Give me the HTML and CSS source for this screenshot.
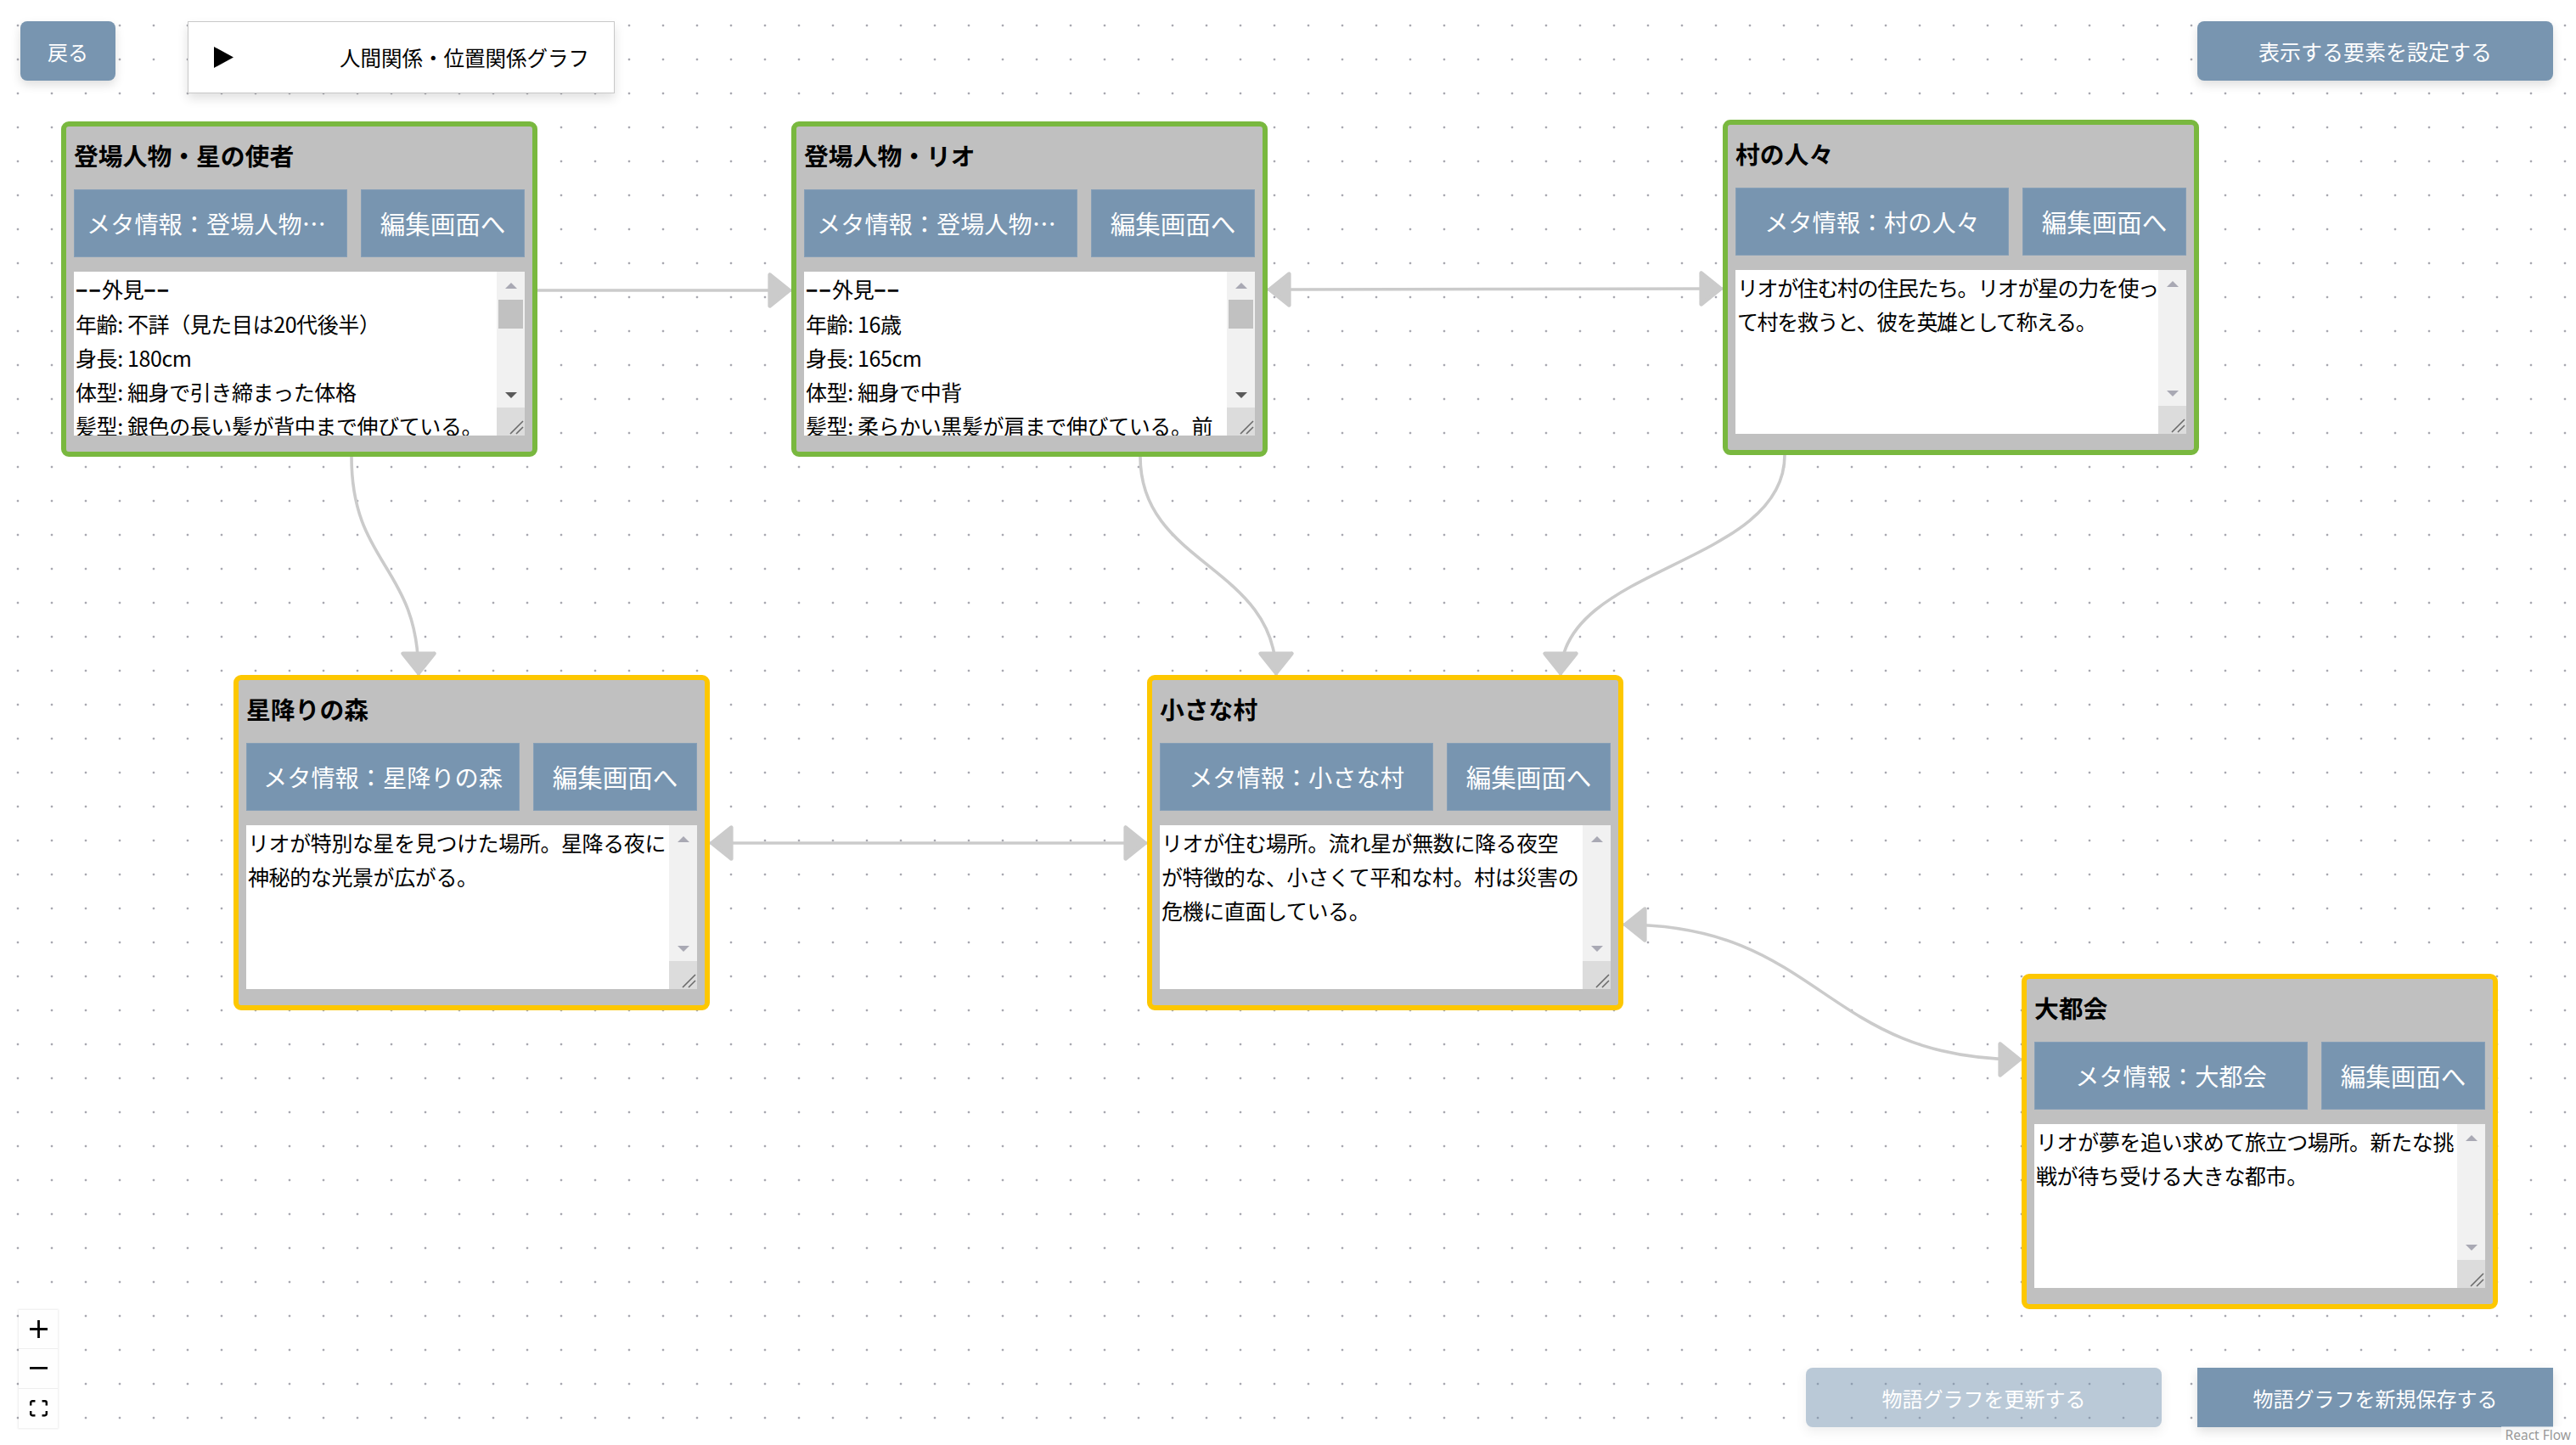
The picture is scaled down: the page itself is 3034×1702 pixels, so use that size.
FILE: index.html
```html
<!DOCTYPE html>
<html lang="ja">
<head>
<meta charset="utf-8">
<title>人間関係・位置関係グラフ</title>
<link rel="stylesheet" href="styles.css">
</head>
<body>
<div class="flow">
  <svg class="edges" width="3034" height="1702" viewBox="0 0 3034 1702">
    <defs>
      <marker id="arrow" viewBox="-10 -10 20 20" markerWidth="92" markerHeight="92" markerUnits="userSpaceOnUse" orient="auto-start-reverse" refX="0.5" refY="0">
        <polyline points="-5,-4 0,0 -5,4 -5,-4" fill="#cbcbcb" stroke="#cbcbcb" stroke-width="1" stroke-linejoin="round" stroke-linecap="round"/>
      </marker>
    </defs>
    <path class="edge" d="M633 342 L932 342" marker-end="url(#arrow)"/>
    <path class="edge" d="M1493 341 C1761 341 1761 340 2029 340" marker-start="url(#arrow)" marker-end="url(#arrow)"/>
    <path class="edge" d="M414 538 C414 666 493 666 493 795" marker-end="url(#arrow)"/>
    <path class="edge" d="M1343 538 C1343 666 1503 666 1503 795" marker-end="url(#arrow)"/>
    <path class="edge" d="M2102 536 C2102 666 1838 666 1838 795" marker-end="url(#arrow)"/>
    <path class="edge" d="M836 993 L1351 993" marker-start="url(#arrow)" marker-end="url(#arrow)"/>
    <path class="edge" d="M1912 1089 C2146 1089 2146 1248 2381 1248" marker-start="url(#arrow)" marker-end="url(#arrow)"/>
  </svg>

  <div class="node green n1">
    <div class="node-title">登場人物・星の使者</div>
    <div class="node-actions">
      <button class="btn meta"><span class="label">メタ情報：登場人物・星の使者</span></button>
      <button class="btn edit">編集画面へ</button>
    </div>
    <div class="notes">
      <div class="notes-text"><span class="dash">−−</span>外見<span class="dash">−−</span><br>年齢: 不詳（見た目は20代後半）<br>身長: 180cm<br>体型: 細身で引き締まった体格<br>髪型: 銀色の長い髪が背中まで伸びている。</div>
      <div class="scrollbar">
        <span class="sb-btn up"></span>
        <span class="thumb"></span>
        <span class="sb-space"></span>
        <span class="sb-btn down active"></span>
        <span class="grip"><svg width="33" height="33" viewBox="0 0 33 33"><path d="M16 31 L31 16 M23 31 L31 23" stroke="#6b6b6b" stroke-width="1.6" fill="none"/></svg></span>
      </div>
    </div>
  </div>

  <div class="node green n2">
    <div class="node-title">登場人物・リオ</div>
    <div class="node-actions">
      <button class="btn meta"><span class="label">メタ情報：登場人物・リオ</span></button>
      <button class="btn edit">編集画面へ</button>
    </div>
    <div class="notes">
      <div class="notes-text"><span class="dash">−−</span>外見<span class="dash">−−</span><br>年齢: 16歳<br>身長: 165cm<br>体型: 細身で中背<br>髪型: 柔らかい黒髪が肩まで伸びている。前</div>
      <div class="scrollbar">
        <span class="sb-btn up"></span>
        <span class="thumb"></span>
        <span class="sb-space"></span>
        <span class="sb-btn down active"></span>
        <span class="grip"><svg width="33" height="33" viewBox="0 0 33 33"><path d="M16 31 L31 16 M23 31 L31 23" stroke="#6b6b6b" stroke-width="1.6" fill="none"/></svg></span>
      </div>
    </div>
  </div>

  <div class="node green n3">
    <div class="node-title">村の人々</div>
    <div class="node-actions">
      <button class="btn meta"><span class="label">メタ情報：村の人々</span></button>
      <button class="btn edit">編集画面へ</button>
    </div>
    <div class="notes">
      <div class="notes-text tight">リオが住む村の住民たち。リオが星の力を使っ<br>て村を救うと、彼を英雄として称える。</div>
      <div class="scrollbar">
        <span class="sb-btn up"></span>
        <span class="sb-space"></span>
        <span class="sb-btn down"></span>
        <span class="grip"><svg width="33" height="33" viewBox="0 0 33 33"><path d="M16 31 L31 16 M23 31 L31 23" stroke="#6b6b6b" stroke-width="1.6" fill="none"/></svg></span>
      </div>
    </div>
  </div>

  <div class="node yellow n4">
    <div class="node-title">星降りの森</div>
    <div class="node-actions">
      <button class="btn meta"><span class="label">メタ情報：星降りの森</span></button>
      <button class="btn edit">編集画面へ</button>
    </div>
    <div class="notes">
      <div class="notes-text">リオが特別な星を見つけた場所。星降る夜に<br>神秘的な光景が広がる。</div>
      <div class="scrollbar">
        <span class="sb-btn up"></span>
        <span class="sb-space"></span>
        <span class="sb-btn down"></span>
        <span class="grip"><svg width="33" height="33" viewBox="0 0 33 33"><path d="M16 31 L31 16 M23 31 L31 23" stroke="#6b6b6b" stroke-width="1.6" fill="none"/></svg></span>
      </div>
    </div>
  </div>

  <div class="node yellow n5">
    <div class="node-title">小さな村</div>
    <div class="node-actions">
      <button class="btn meta"><span class="label">メタ情報：小さな村</span></button>
      <button class="btn edit">編集画面へ</button>
    </div>
    <div class="notes">
      <div class="notes-text">リオが住む場所。流れ星が無数に降る夜空<br>が特徴的な、小さくて平和な村。村は災害の<br>危機に直面している。</div>
      <div class="scrollbar">
        <span class="sb-btn up"></span>
        <span class="sb-space"></span>
        <span class="sb-btn down"></span>
        <span class="grip"><svg width="33" height="33" viewBox="0 0 33 33"><path d="M16 31 L31 16 M23 31 L31 23" stroke="#6b6b6b" stroke-width="1.6" fill="none"/></svg></span>
      </div>
    </div>
  </div>

  <div class="node yellow n6">
    <div class="node-title">大都会</div>
    <div class="node-actions">
      <button class="btn meta"><span class="label">メタ情報：大都会</span></button>
      <button class="btn edit">編集画面へ</button>
    </div>
    <div class="notes">
      <div class="notes-text">リオが夢を追い求めて旅立つ場所。新たな挑<br>戦が待ち受ける大きな都市。</div>
      <div class="scrollbar">
        <span class="sb-btn up"></span>
        <span class="sb-space"></span>
        <span class="sb-btn down"></span>
        <span class="grip"><svg width="33" height="33" viewBox="0 0 33 33"><path d="M16 31 L31 16 M23 31 L31 23" stroke="#6b6b6b" stroke-width="1.6" fill="none"/></svg></span>
      </div>
    </div>
  </div>

  <div class="panel top-left">
    <button class="ui-btn back">戻る</button>
    <div class="graph-title">
      <svg class="play" width="23" height="25" viewBox="0 0 23 25"><polygon points="0,0 23,12.5 0,25" fill="#000"/></svg>
      <span>人間関係・位置関係グラフ</span>
    </div>
  </div>

  <div class="panel top-right">
    <button class="ui-btn settings">表示する要素を設定する</button>
  </div>

  <div class="panel bottom-right">
    <button class="ui-btn save disabled">物語グラフを更新する</button>
    <button class="ui-btn save square">物語グラフを新規保存する</button>
  </div>

  <div class="panel controls">
    <button class="ctrl"><svg viewBox="0 0 32 32"><path d="M32 18.133H18.133V32h-4.266V18.133H0v-4.266h13.867V0h4.266v13.867H32z"/></svg></button>
    <button class="ctrl"><svg viewBox="0 0 32 5"><path d="M0 0h32v4.2H0z"/></svg></button>
    <button class="ctrl"><svg viewBox="0 0 32 30"><path d="M3.692 4.63c0-.53.4-.938.939-.938h5.215V0H4.708C2.13 0 0 2.054 0 4.63v5.216h3.692V4.631zM27.354 0h-5.2v3.692h5.17c.53 0 .984.4.984.939v5.215H32V4.631A4.624 4.624 0 0027.354 0zm.954 24.830c0 .532-.4.94-.939.94h-5.215v3.768h5.215c2.577 0 4.631-2.13 4.631-4.707v-5.139h-3.692v5.139zm-23.677.94c-.531 0-.939-.4-.939-.94v-5.138H0v5.139c0 2.577 2.13 4.707 4.708 4.707h5.138V25.770H4.631z"/></svg></button>
  </div>

  <div class="attribution">React Flow</div>
</div>
</body>
</html>
```
FILE: styles.css
```css
* { box-sizing: border-box; }
html, body { margin: 0; padding: 0; }
body {
  width: 3034px;
  height: 1702px;
  overflow: hidden;
  background: #fff;
  font-family: "Noto Sans CJK JP", "Noto Sans", sans-serif;
  color: #000;
}
.flow {
  position: relative;
  width: 3034px;
  height: 1702px;
  overflow: hidden;
  background-color: #fff;
  background-image: radial-gradient(circle at center, #a8a8b0 0, #a8a8b0 1.1px, rgba(168,168,176,0) 1.7px);
  background-size: 40px 40px;
  background-position: 1px 10px;
}
.edges {
  position: absolute;
  left: 0;
  top: 0;
  z-index: 1;
}
.edge {
  fill: none;
  stroke: #cbcbcb;
  stroke-width: 3.6;
}

/* nodes */
.node {
  position: absolute;
  z-index: 2;
  width: 561px;
  height: 395px;
  border: 6px solid;
  border-radius: 9px;
  background: #c0c0c0;
  padding: 0 9px;
  display: flex;
  flex-direction: column;
}
.green { border-color: #79b83f; }
.yellow { border-color: #fdc700; }
.n1 { left: 72px; top: 143px; }
.n2 { left: 932px; top: 143px; }
.n3 { left: 2029px; top: 141px; }
.n4 { left: 275px; top: 795px; }
.n5 { left: 1351px; top: 795px; }
.n6 { left: 2381px; top: 1147px; }

.node-title {
  height: 66px;
  margin-bottom: 8px;
  display: flex;
  align-items: center;
  font-size: 28.8px;
  font-weight: 700;
  white-space: nowrap;
}
.node-actions {
  height: 80px;
  margin-bottom: 17px;
  display: flex;
  gap: 16px;
}
.btn {
  height: 80px;
  margin: 0;
  border: 1px solid #869fb7;
  background: #7895b0;
  color: #fff;
  font-family: inherit;
  font-size: 28.2px;
  line-height: 1.2;
  white-space: nowrap;
}
.meta {
  flex: 1 1 0;
  min-width: 0;
  padding: 0 14px;
  display: block;
  text-align: center;
}
.label {
  display: block;
  overflow: hidden;
  text-overflow: ellipsis;
  white-space: nowrap;
}
.edit {
  flex: none;
  width: 193px;
  padding: 0;
  font-size: 29.5px;
}

.notes {
  height: 193px;
  display: flex;
  background: #fff;
}
.notes-text {
  flex: 1 1 0;
  min-width: 0;
  overflow: hidden;
  padding: 0 2px;
  font-size: 25px;
  line-height: 40px;
  letter-spacing: -0.4px;
  white-space: nowrap;
}
.notes-text.tight { letter-spacing: -1.4px; }
.dash {
  font-family: "Noto Sans", "DejaVu Sans", sans-serif;
  font-weight: 700;
  letter-spacing: 1px;
}
.scrollbar {
  width: 33px;
  flex: none;
  display: flex;
  flex-direction: column;
  background: #f1f1f1;
}
.sb-btn {
  height: 33px;
  flex: none;
  display: flex;
  align-items: center;
  justify-content: center;
}
.sb-btn::before {
  content: "";
  width: 0;
  height: 0;
  border-left: 7.5px solid transparent;
  border-right: 7.5px solid transparent;
}
.sb-btn.up::before { border-bottom: 7.5px solid #a9a9b4; }
.sb-btn.down::before { border-top: 7.5px solid #a9a9b4; margin-top: 4px; }
.sb-btn.down.active::before { border-top-color: #5a5a5a; }
.thumb {
  height: 34px;
  flex: none;
  margin: 0 2px;
  background: #c1c1c1;
}
.sb-space { flex: 1 1 auto; }
.grip {
  height: 33px;
  flex: none;
  background: #dcdcdc;
  display: block;
}
.grip svg { display: block; }

/* panels */
.panel {
  position: absolute;
  z-index: 5;
}
.ui-btn {
  margin: 0;
  border: none;
  background: #7895b0;
  color: #fff;
  font-family: inherit;
  cursor: pointer;
  box-shadow: 0 5px 12px rgba(0, 0, 0, 0.13);
}
.top-left {
  top: 25px;
  left: 24px;
  display: flex;
  align-items: flex-start;
  gap: 85px;
}
.back {
  width: 112px;
  height: 70px;
  border-radius: 8px;
  font-size: 24px;
}
.graph-title {
  width: 503px;
  height: 85px;
  background: #fff;
  border: 1px solid #c8c8c8;
  box-shadow: 0 6px 12px rgba(0, 0, 0, 0.12);
  display: flex;
  align-items: center;
  justify-content: space-between;
  padding: 0 29px 0 30px;
  font-size: 24.5px;
  white-space: nowrap;
}
.play { display: block; }
.top-right {
  top: 25px;
  right: 27px;
}
.settings {
  width: 419px;
  height: 70px;
  border-radius: 8px;
  font-size: 25px;
}
.bottom-right {
  right: 27px;
  bottom: 21px;
  display: flex;
  gap: 42px;
}
.save {
  width: 419px;
  height: 70px;
  font-size: 24px;
}
.save.disabled {
  opacity: 0.5;
  border-radius: 8px;
}
.save.square { border-radius: 0; }

.controls {
  left: 22px;
  bottom: 20px;
  width: 46px;
  display: flex;
  flex-direction: column;
  box-shadow: 0 0 2px 1px rgba(0, 0, 0, 0.08);
}
.ctrl {
  width: 46px;
  height: 46.5px;
  margin: 0;
  padding: 0;
  border: none;
  border-bottom: 1px solid #eee;
  background: #fefefe;
  display: flex;
  align-items: center;
  justify-content: center;
}
.ctrl:last-child { border-bottom: none; }
.ctrl svg {
  width: 21px;
  max-height: 21px;
  fill: #000;
}
.attribution {
  position: absolute;
  z-index: 5;
  right: 0;
  bottom: 0;
  padding: 1px 6px 2px 5px;
  background: rgba(255, 255, 255, 0.5);
  color: #999;
  font-family: "Noto Sans", "Liberation Sans", sans-serif;
  font-size: 15.5px;
  line-height: 1.2;
}
```
